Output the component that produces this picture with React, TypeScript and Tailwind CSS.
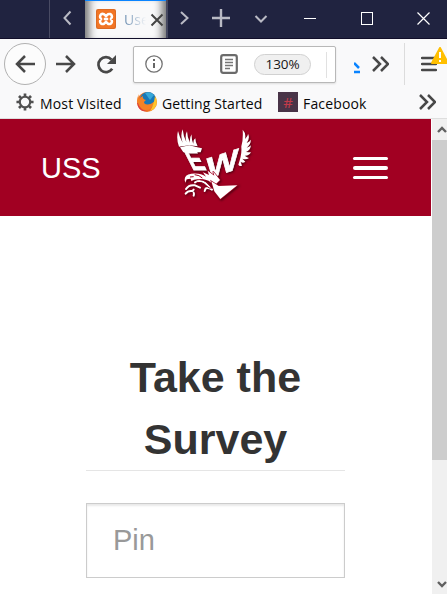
import React from "react";

function Eagle() {
  return (
    <svg width="90" height="90" viewBox="0 0 270 270" className="shrink-0" style={{ filter: "drop-shadow(1px 1px 1px #4d0010)" }}>
      <g fill="#fff">
        <path d="M27 80 Q18 56 24 33 Q29 52 38 68 Q30 47 38 28 Q40 49 49 66 Q44 46 51 34 Q52 53 60 68 Q58 53 65 43 Q64 58 70 72 Q69 59 76 55 Q76 66 83 79 L58 76 Z" />
        <path d="M30 82 L58 76 L82 82 L96 85 L92 97 L40 97 Z" />
        <path d="M214 79 Q220 60 218 29 Q229 40 225 57 Q235 48 234 41 Q241 54 230 69 Q240 64 242 59 Q244 72 230 83 Q240 80 243 76 Q241 91 228 96 Q237 97 243 97 Q237 108 224 107 Q232 112 237 114 Q228 121 217 116 L226 125 Q218 131 212 125 L216 137 Q208 140 205 134 Q216 103 214 83 Z" />
        <text transform="matrix(.9 0 .5 .98 67 149)" x="0" y="0" fontSize="90" fontWeight="900" fontFamily="'Liberation Sans', Arial, sans-serif" stroke="#fff" strokeWidth="3" textLength="50" lengthAdjust="spacingAndGlyphs">E</text>
        <text transform="matrix(1.12 -.36 -.02 .96 109 177)" x="0" y="0" fontSize="92" fontWeight="900" fontFamily="'Liberation Sans', Arial, sans-serif" stroke="#fff" strokeWidth="2" textLength="86" lengthAdjust="spacingAndGlyphs">W</text>
        <path d="M44 180 Q43 164 64 161 Q91 158 108 170 L99 157 L117 165 L113 152 L133 167 L129 154 L150 180 L134 196 L116 182 Q101 177 88 178 Q74 176 64 183 L62 176 L50 178 L46 188 Z" stroke="#a10022" strokeWidth="4" paintOrder="stroke" />
        <path d="M124 184 L146 198 L202 196 L151 237 L133 214 Z" stroke="#a10022" strokeWidth="4" paintOrder="stroke" />
      </g>
      <g fill="none" stroke="#fff" strokeWidth="6" strokeLinecap="round" strokeLinejoin="round">
        <path d="M75 187 Q92 178 107 190 L126 209 Q115 202 107 205 L104 213 M90 203 L75 196 Q57 193 48 207 M71 209 L67 213 Q54 211 47 221 M71 218 Q73 222 71 227" />
      </g>
      <g fill="none" stroke="#a10022" strokeWidth="3">
        <path d="M80 187 Q95 185 109 198 Q119 207 126 204 L110 186 Q99 177 89 179 M74 164 Q88 165 97 174 M60 171 L71 170" />
      </g>
    </svg>
  );
}

function Chevron({ d, className }: { d: string; className: string }) {
  return <svg viewBox="0 0 16 16" className={`h-4 w-4 shrink-0 fill-none stroke-current stroke-2 ${className}`}><path d={d} /></svg>;
}

function TitleBar() {
  return (
    <div className="flex h-[39px] w-full items-stretch border-b border-[#110e2a] bg-[#202340] text-[#b9bac4]">
      <div className="w-[50px] border-r border-[#494b63]" />
      <div className="flex w-[35px] items-center justify-center"><Chevron d="M10.5 1.5 4.5 8l6 6.5" className="mt-[-2px]" /></div>
      <div className="flex w-[81px] items-center border-t border-t-[#0a84ff] bg-[#f9f9fa] pl-[11px] shadow-[inset_11px_0_9px_-7px_#6f6f6f,inset_-11px_0_9px_-7px_#6f6f6f]">
        <svg width="20" height="20" viewBox="0 0 20 20" className="mt-[-1px] shrink-0">
          <rect width="20" height="20" rx="2" fill="#dc6a23" /><rect x="1" y="1" width="18" height="18" rx="2" fill="#f27524" />
          <path d="M7 10H5.5A2.5 2.5 0 1 1 8 5.2L10 7l2-1.8A2.5 2.5 0 1 1 14.5 10H13m-6 0H5.5A2.5 2.5 0 1 0 8 14.8l2-1.8 2 1.8a2.5 2.5 0 1 0 2.5-4.8M7 10h6" fill="none" stroke="#fff" strokeWidth="2.5" />
          <path d="M7 8v4m6-4v4" stroke="#f27524" strokeWidth="1.5" />
        </svg>
        <span className="ml-2 w-[26px] shrink-0 bg-gradient-to-r from-[#6589ad] to-[#f9f9fa] to-85% bg-clip-text font-['Open_Sans'] text-[14px] leading-5 text-transparent">Use</span>
        <svg viewBox="0 0 14 14" className="ml-0 h-[14px] w-[14px] shrink-0 stroke-[#444] stroke-2"><path d="m1.5 1.5 11 11m0-11-11 11" /></svg>
      </div>
      <div className="flex w-[36px] items-center justify-center border-l-2 border-[#464860]"><Chevron d="m4 2 6.5 6L4 14" className="mt-[-2px]" /></div>
      <div className="flex w-[38px] items-center justify-center"><svg viewBox="0 0 18 18" className="mt-[-3px] h-[18px] w-[18px] stroke-current stroke-[2.4]"><path d="M9 0v18M0 9h18" /></svg></div>
      <div className="flex w-[43px] items-center justify-center"><Chevron d="m2.5 5 5.5 5.5L13.5 5" className="mr-[2px]" /></div>
      <div className="flex flex-1 items-center justify-between pl-[21px] pr-[17px] text-white">
        <svg width="12" height="12" className="mt-[-3px]"><path d="M0 6.5h12" stroke="currentColor" /></svg>
        <svg width="12" height="13" className="mt-[-1px]"><rect x=".5" y=".5" width="11" height="12" fill="none" stroke="currentColor" /></svg>
        <svg width="13" height="13" className="mt-[-1px]"><path d="m.5.5 12 12m0-12-12 12" stroke="currentColor" strokeWidth="1.2" /></svg>
      </div>
    </div>
  );
}

function NavigationBar() {
  return (
    <div className="flex h-[49px] items-center text-[#484848]">
      <div className="ml-1 flex h-[42px] w-[42px] shrink-0 items-center justify-center rounded-full border border-[#b1b1b1] bg-[#fcfcfc]">
        <svg viewBox="0 0 20 18" className="h-[18px] w-[20px] fill-none stroke-current stroke-[2.5]"><path d="M20 9H2M10 1 2 9l8 8" /></svg>
      </div>
      <svg viewBox="0 0 20 18" className="ml-[10px] h-[18px] w-[20px] shrink-0 fill-none stroke-current stroke-[2.5]"><path d="M0 9h18M10 1l8 8-8 8" /></svg>
      <svg viewBox="0 0 20 20" className="ml-[20px] h-[20px] w-[20px] shrink-0"><path d="M16.2 14.8A7.5 7.5 0 1 1 15.5 5.6" fill="none" stroke="currentColor" strokeWidth="2.7" /><path d="M20 1v9h-9Z" fill="currentColor" /></svg>
      <div className="ml-[17px] mt-[2px] flex h-[37px] w-[203px] shrink-0 items-center rounded-[2px] border border-[#b8b8b8] bg-white shadow-[0_1px_2px_#ddd]">
        <svg viewBox="0 0 18 18" className="ml-[11px] mt-[-2px] h-[18px] w-[18px] shrink-0"><circle cx="9" cy="9" r="8.2" fill="none" stroke="#737373" strokeWidth="1.3" /><path d="M9 4v2m0 2v5" stroke="#666" strokeWidth="2" /></svg>
        <svg viewBox="0 0 18 20" className="ml-[57px] mt-[-2px] h-[20px] w-[18px] shrink-0"><rect x="1.2" y="1.2" width="15.6" height="17.6" rx="2" fill="none" stroke="#6b6b6b" strokeWidth="2.2" /><path d="M5 5.5h8m-8 3h8m-8 3h8m-8 3h5" stroke="#777" strokeWidth="1.3" /></svg>
        <span className="ml-4 flex h-[21px] w-[57px] items-center justify-center rounded-full border border-[#d1d1d1] bg-[#f0f0f0] font-['Open_Sans'] text-[13.5px] tracking-[-.1px] text-[#171717]">130%</span>
        <span className="ml-[15px] h-[26px] w-px bg-[#e1e1e1]" />
      </div>
      <svg viewBox="0 0 6 14" className="ml-[18px] mt-[9px] h-[14px] w-[6px] shrink-0 fill-none stroke-[#0a84ff] stroke-[2.5]"><path d="m0 2 5 5M0 11h6" /></svg>
      <svg viewBox="0 0 17 16" className="ml-[12px] h-4 w-[17px] shrink-0 fill-none stroke-current stroke-[2.5]"><path d="m1 1 7 7-7 7M9 1l7 7-7 7" /></svg>
      <div className="ml-[15px] h-[42px] w-px shrink-0 bg-[#dcdcdc]" />
      <div className="relative ml-4 h-[18px] w-4 shrink-0">
        <svg viewBox="0 0 16 18" className="mt-[-1px] h-[18px] w-4 stroke-current stroke-[2.5]"><path d="M1 4h14M1 10h14M1 16h14" strokeLinecap="round" /></svg>
        <svg viewBox="0 0 18 18" className="absolute left-[10px] top-[-8px] h-[18px] w-[18px]"><path d="M9 1 17 16H1Z" fill="#ffbf00" stroke="#ffbf00" strokeWidth="2" strokeLinejoin="round" /><path d="M9 5v6m0 2v2" stroke="#fff" strokeWidth="2" /></svg>
      </div>
    </div>
  );
}

function Bookmarks() {
  return (
    <div className="flex h-[31px] items-center border-b border-[#dedede] font-['Open_Sans'] text-[14px] text-[#080808]">
      <svg viewBox="-10 -10 20 20" className="ml-4 mt-[-2px] h-[18px] w-[18px] shrink-0"><circle r="5.8" fill="none" stroke="#505050" strokeWidth="2.4" /><path d="M0-9.5V-6M0 9.5V6M-9.5 0H-6M9.5 0H6M-6.7-6.7l2.4 2.4M6.7 6.7 4.3 4.3M6.7-6.7 4.3-4.3M-6.7 6.7l2.4-2.4" stroke="#505050" strokeWidth="3" /></svg>
      <span className="ml-[6px] w-[82px] whitespace-nowrap tracking-[.16px]">Most Visited</span>
      <svg viewBox="0 0 20 20" className="ml-[15px] mt-[-2px] h-[20px] w-[20px] shrink-0">
        <circle cx="10" cy="10" r="10" fill="#ee7424" /><circle cx="11" cy="8" r="8" fill="#1778b8" /><path d="M8 1Q13-1 17 3l-4 5Z" fill="#36a7d8" />
        <path d="M2 2Q1 5 2 8 3 5 6 4 5 7 9 8 7 9 7 11 11 15 18 9 15 19 8 18 2 17 0 9 0 5 2 2Z" fill="#f58225" /><path d="M18 4q3 5 1 10-2 4-6 5 4-6 5-15Z" fill="#ffc52b" /><path d="M1 11q2 7 9 8-8 2-10-8" fill="#dc413d" />
      </svg>
      <span className="ml-[5px] w-[102px] whitespace-nowrap tracking-[.1px]">Getting Started</span>
      <span className="ml-[14px] mt-[-2px] flex h-[20px] w-[20px] shrink-0 items-center justify-center bg-[#493448] font-['Noto_Sans'] text-[15px] leading-none text-[#c23b4a]">#</span>
      <span className="ml-[5px] w-[65px] whitespace-nowrap tracking-[.15px]">Facebook</span>
      <svg viewBox="0 0 17 16" className="ml-auto mr-[11px] mt-[-2px] h-4 w-[17px] fill-none stroke-[#484848] stroke-[2.5]"><path d="m1 1 7 7-7 7M9 1l7 7-7 7" /></svg>
    </div>
  );
}

export default function App() {
  return (
    <main className="h-[594px] w-[447px] overflow-hidden bg-white font-['Liberation_Sans',Arial,sans-serif]">
      <TitleBar />
      <div className="bg-[#f9f9fa]"><NavigationBar /><Bookmarks /></div>
      <div className="flex h-[475px]">
        <div className="w-[431px]">
          <header className="flex h-[97px] items-start bg-[#a10022]">
            <span className="ml-[41px] mt-[32px] w-[64px] text-[29px] leading-[34px] text-white">USS</span>
            <div className="ml-[65px] mt-[1px]"><Eagle /></div>
            <button aria-label="Menu" className="ml-[93px] mt-[38px] flex w-[35px] flex-col gap-[6px]">
              <span className="h-[3px] rounded-full bg-white" /><span className="h-[4px] rounded-full bg-white" /><span className="h-[3px] rounded-full bg-white" />
            </button>
          </header>
          <section className="ml-[86px] w-[259px] pt-[130px]">
            <h1 className="h-[125px] border-b border-[#e5e5e5] text-center text-[43px] font-bold leading-[62px] text-[#333]">Take the Survey</h1>
            <input placeholder="Pin" className="mt-8 h-[75px] w-full border border-[#ccc] px-[26px] text-[29px] text-[#555] shadow-[inset_0_2px_2px_#e9e9e9] outline-none placeholder:text-[#999]" />
          </section>
        </div>
        <aside className="ml-px flex w-[15px] flex-col bg-[#f0f0f0] text-[#606060]">
          <div className="flex h-[21px] items-center justify-center"><svg viewBox="0 0 10 8" className="ml-[4px] h-2 w-[10px] fill-none stroke-current stroke-[2.4]"><path d="m1 6 4-4 4 4" /></svg></div>
          <div className="h-[320px] bg-[#cdcdcd]" />
          <div className="mt-auto flex h-[21px] items-center justify-center"><svg viewBox="0 0 10 8" className="ml-[4px] h-2 w-[10px] fill-none stroke-current stroke-[2.4]"><path d="m1 2 4 4 4-4" /></svg></div>
        </aside>
      </div>
    </main>
  );
}
